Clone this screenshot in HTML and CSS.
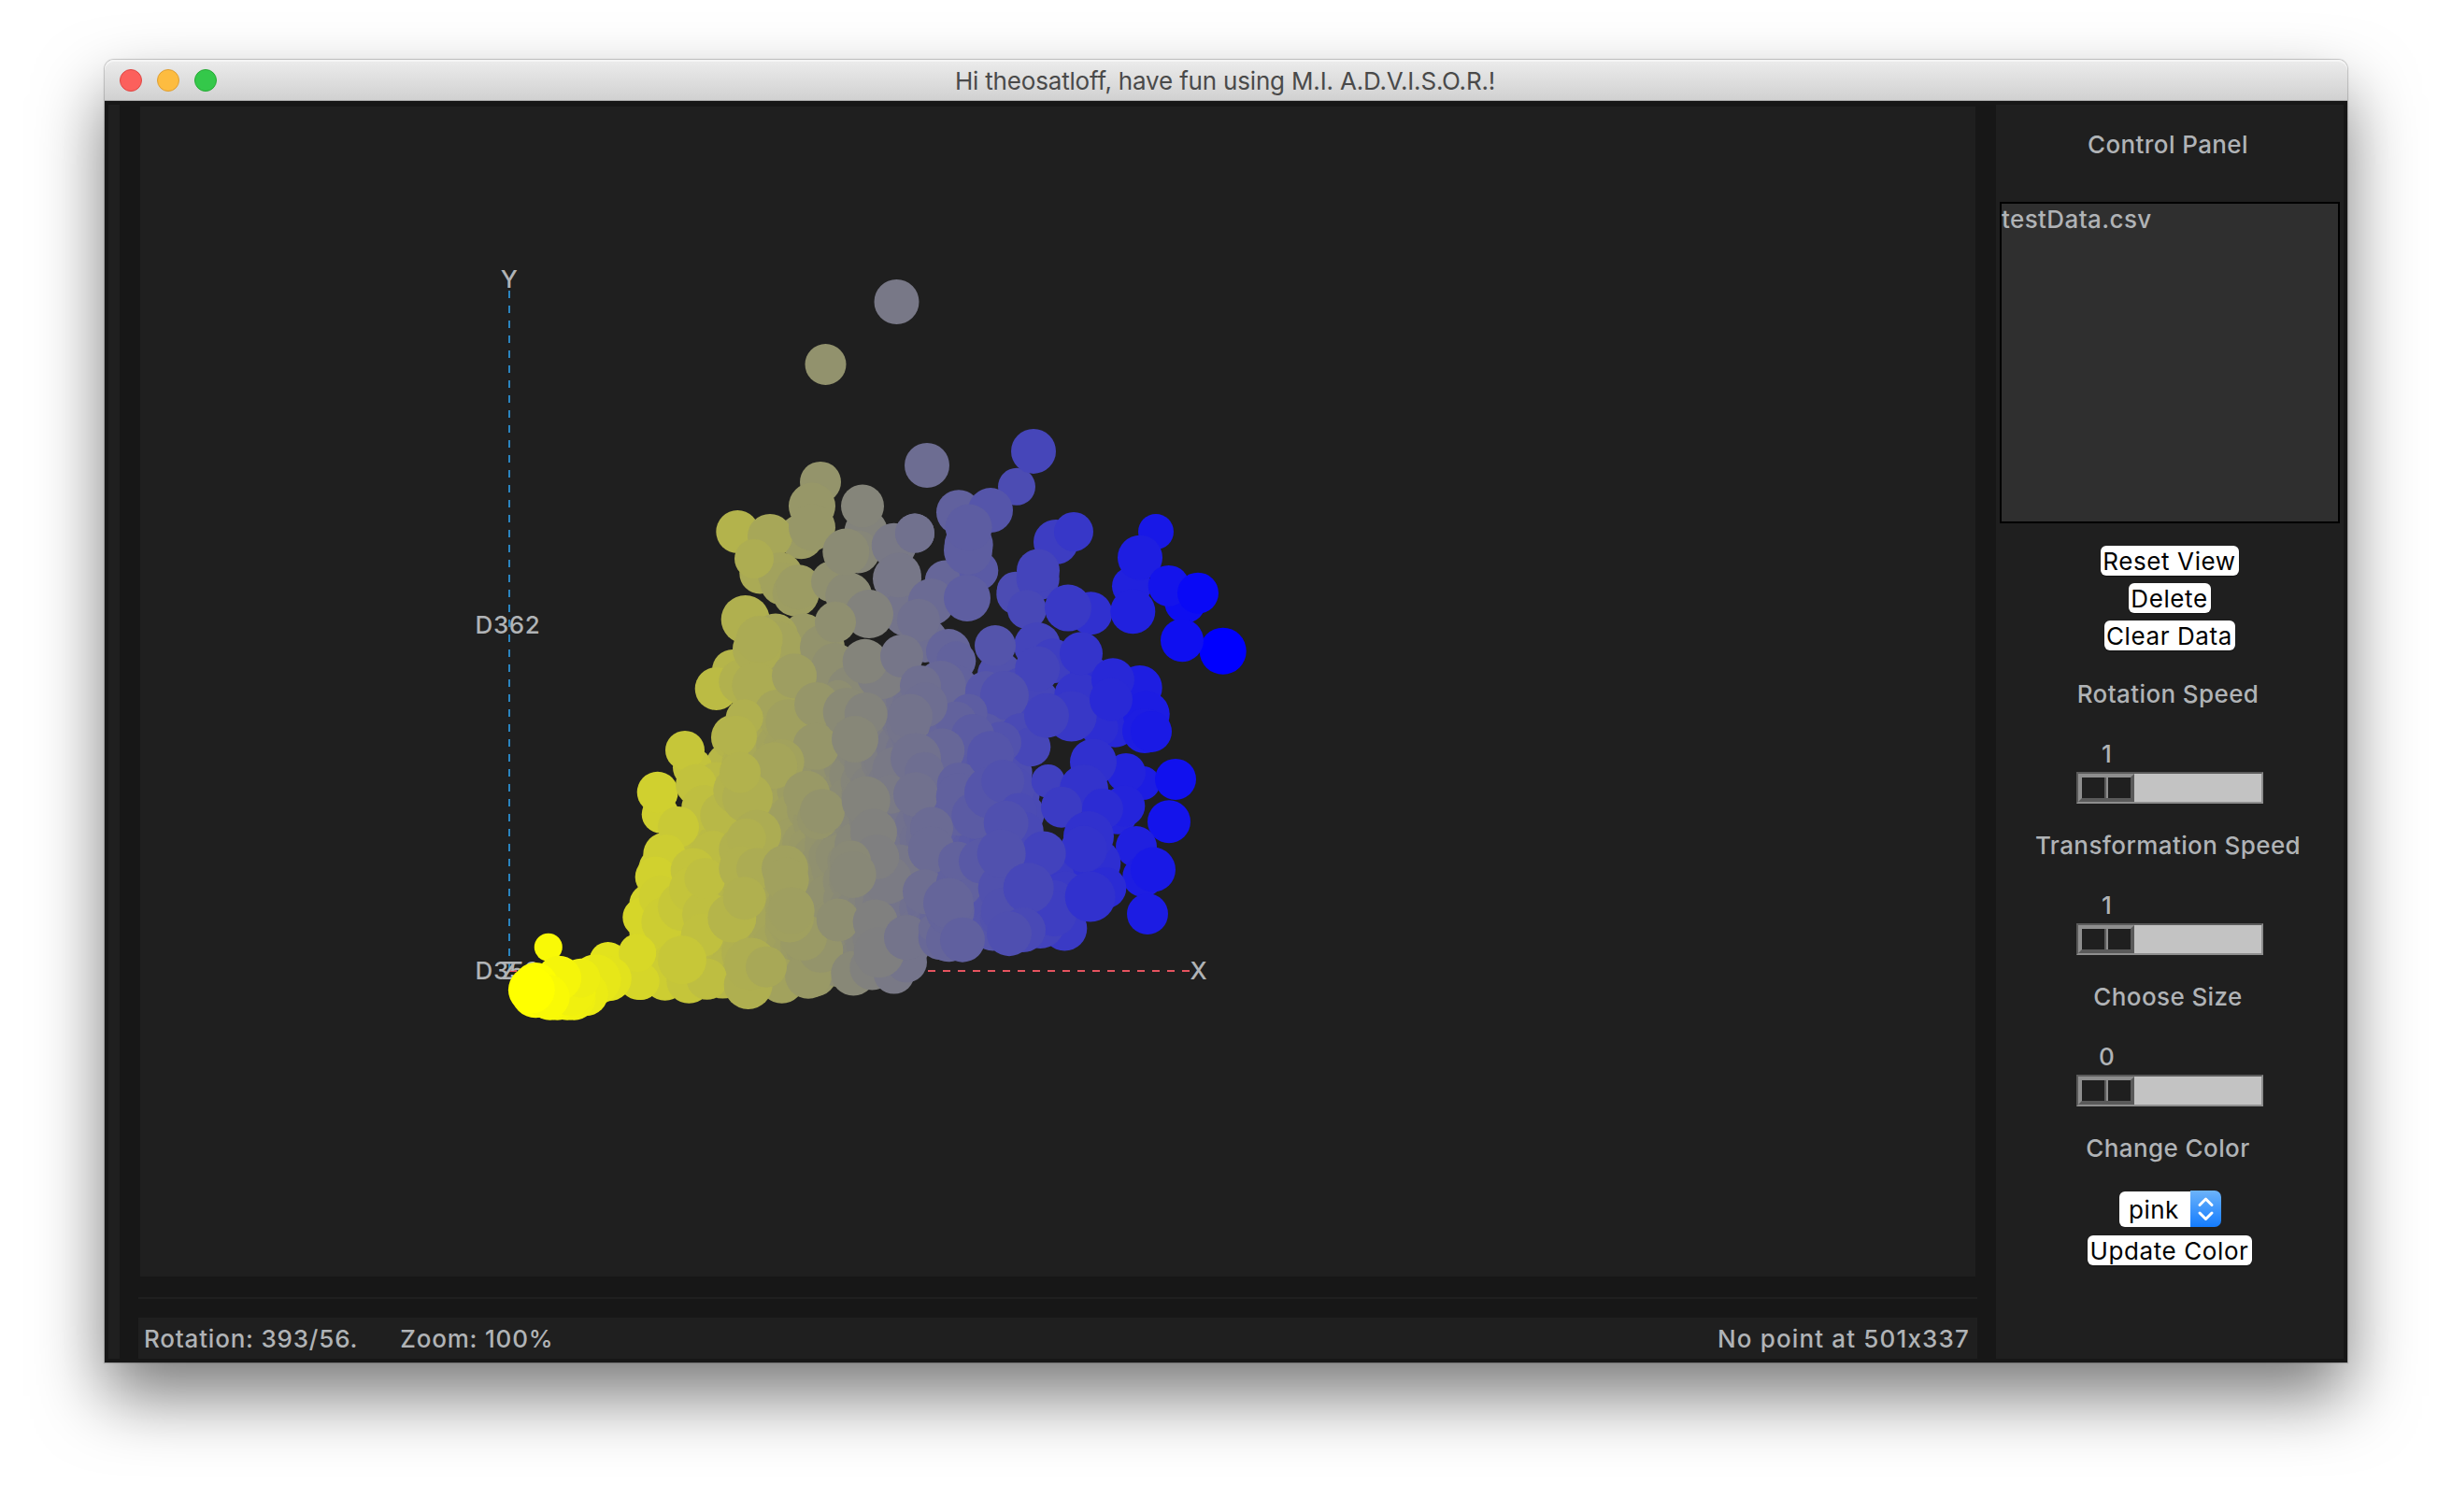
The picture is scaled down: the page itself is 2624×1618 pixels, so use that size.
FILE: index.html
```html
<!DOCTYPE html>
<html lang="en">
<head>
<meta charset="utf-8">
<title>Hi theosatloff, have fun using M.I. A.D.V.I.S.O.R.!</title>
<link rel="stylesheet" href="styles.css">
</head>
<body>
<main class="window">
  <header class="titlebar">
    <div class="lights">
      <span class="light light-close"></span>
      <span class="light light-min"></span>
      <span class="light light-max"></span>
    </div>
    <h1 class="title">Hi theosatloff, have fun using M.I. A.D.V.I.S.O.R.!</h1>
    <div></div>
  </header>
  <div class="content">
    <div class="gutter"></div>
    <section class="workspace">
      <svg class="plot" viewBox="150 114 1964 1252" width="1964" height="1252">
        <path class="axis axis-y" d="M545 1039V303"/>
        <path class="axis axis-x" d="M545 1039H1275"/>
        <g class="axis-labels">
          <text x="545" y="307.5">Y</text>
          <text x="1283" y="1048">X</text>
          <text x="545" y="1048">Z</text>
          <text x="543.5" y="678">D362</text>
          <text x="543.5" y="1048">D359</text>
        </g>
        <g id="points"></g>
      </svg>
      <div class="sash"></div>
      <footer class="status">
        <span class="rotation">Rotation: 393/56.</span>
        <span class="zoom">Zoom: 100%</span>
        <span class="hover">No point at 501x337</span>
      </footer>
    </section>
    <aside class="panel">
      <h2 class="label heading">Control Panel</h2>
      <div class="files"><div class="file">testData.csv</div></div>
      <div class="actions">
        <button class="btn reset">Reset View</button>
        <button class="btn delete">Delete</button>
        <button class="btn clear">Clear Data</button>
      </div>
      <div class="control">
        <div class="label">Rotation Speed</div>
        <div class="value">1</div>
        <div class="slider"><div class="thumb"><i></i><i></i></div></div>
      </div>
      <div class="control">
        <div class="label">Transformation Speed</div>
        <div class="value">1</div>
        <div class="slider"><div class="thumb"><i></i><i></i></div></div>
      </div>
      <div class="control">
        <div class="label">Choose Size</div>
        <div class="value">0</div>
        <div class="slider"><div class="thumb"><i></i><i></i></div></div>
      </div>
      <div class="label">Change Color</div>
      <div class="select">
        <span class="select-text">pink</span>
        <span class="select-arrows">
          <svg width="33" height="39" viewBox="0 0 33 39"><path d="M10 15.5l6.5-6.5 6.5 6.5M10 24l6.5 6.5 6.5-6.5"/></svg>
        </span>
      </div>
      <button class="btn update">Update Color</button>
    </aside>
  </div>
</main>
<script src="points.js"></script>
</body>
</html>
```
FILE: styles.css
```css
* { box-sizing: border-box; }

body {
  margin: 0;
  width: 2624px;
  height: 1618px;
  overflow: hidden;
  background: #fff;
  padding: 64px 112px;
  font-family: Inter, "Liberation Sans", sans-serif;
  font-size: 26px;
  font-weight: 500;
  line-height: 32px;
  color: #b0b3b6;
}

h1, h2 { margin: 0; font-size: inherit; font-weight: inherit; }

.window {
  width: 2400px;
  height: 1394px;
  display: flex;
  flex-direction: column;
  border-radius: 10px 10px 0 0;
  box-shadow: 0 0 1px 1px rgba(0, 0, 0, .2), 0 36px 72px rgba(0, 0, 0, .52);
}

.titlebar {
  height: 44px;
  display: grid;
  grid-template-columns: 1fr auto 1fr;
  align-items: center;
  padding: 0 16px;
  border-radius: 10px 10px 0 0;
  border-bottom: 1px solid #b0b0b0;
  background: linear-gradient(#ececec, #d1d1d1);
  box-shadow: inset 0 2px 0 #f5f5f5;
}

.lights { display: flex; gap: 16px; }
.light { width: 24px; height: 24px; border-radius: 50%; border: 1px solid; }
.light-close { background: #fc605c; border-color: #df4744; }
.light-min { background: #fdbc40; border-color: #de9f34; }
.light-max { background: #34c84a; border-color: #27aa35; }
.title { color: #4a4a4a; font-weight: 400; letter-spacing: -.18px; padding: 2px 2px 0 0; }

.content {
  height: 1350px;
  display: flex;
  padding: 4px;
  background: #171717;
}
.gutter { width: 12px; background: #1f1f1f; }
.workspace {
  width: 1968px;
  margin: 0 20px;
  display: flex;
  flex-direction: column;
}
.plot { display: block; margin: 2px 2px 22px; background: #1f1f1f; }
.sash { height: 2px; margin-bottom: 20px; background: #1f1f1f; }
.status {
  height: 44px;
  display: flex;
  align-items: center;
  padding: 2px 8px 0 6px;
  background: #1f1f1f;
  letter-spacing: .8px;
}
.zoom { margin-left: 45px; }
.hover { margin-left: auto; letter-spacing: 1.15px; }

.axis { fill: none; stroke-width: 2; stroke-dasharray: 8 8; }
.axis-y { stroke: #2a84bf; }
.axis-x { stroke: #e5535f; }
.axis-labels { fill: #b0b3b6; text-anchor: middle; letter-spacing: .6px; }

.panel {
  width: 372px;
  padding: 27px 4px 0;
  display: flex;
  flex-direction: column;
  align-items: center;
  background: #1f1f1f;
}
.label { letter-spacing: .4px; padding-right: 4px; }
.heading { margin-bottom: 45px; }
.files {
  width: 364px;
  height: 344px;
  padding-top: 1px;
  border: 2px solid #000;
  background: #2f2f2f;
  margin-bottom: 24px;
  letter-spacing: .4px;
}
.actions { display: flex; flex-direction: column; align-items: center; gap: 8px; margin-bottom: 31px; }
.btn {
  height: 32px;
  padding: 0 1px 0 0;
  line-height: 33px;
  border: 0;
  border-radius: 6px;
  background: #fff;
  color: #000;
  font-family: inherit;
  font-size: inherit;
  font-weight: 400;
  letter-spacing: .6px;
  white-space: nowrap;
  box-shadow: 0 1px 1px rgba(0, 0, 0, .4);
}
.reset { width: 148px; }
.delete { width: 88px; }
.clear { width: 140px; }
.update { width: 176px; margin-top: 9px; }

.control { height: 162px; display: flex; flex-direction: column; align-items: center; }
.value { margin-top: 32px; margin-right: 135px; }
.slider {
  width: 200px;
  height: 34px;
  margin-top: 3px;
  border: 2px solid;
  border-color: #5a5a5a #8e8e8e #8e8e8e #5a5a5a;
  background: #c3c3c3;
}
.thumb {
  width: 60px;
  height: 30px;
  display: grid;
  grid-template-columns: 26px 26px;
  border: 4px solid;
  border-color: #8e8e8e #5a5a5a #5a5a5a #8e8e8e;
  background: #1f1f1f;
}
.thumb i:first-child { border-right: 2px solid #5a5a5a; }
.thumb i:last-child { border-left: 2px solid #8e8e8e; }

.select { display: flex; height: 39px; margin: 29px 0 0 1px; align-items: center; }
.select-text {
  width: 76px;
  height: 38px;
  line-height: 40px;
  padding-left: 10px;
  border-radius: 6px 0 0 6px;
  background: #fff;
  color: #000;
  font-weight: 400;
  letter-spacing: .5px;
}
.select-arrows {
  width: 33px;
  height: 39px;
  border-radius: 0 7px 7px 0;
  background: linear-gradient(#6cb3fa, #147cfe);
}
.select-arrows svg { display: block; fill: none; stroke: #fff; stroke-width: 3; stroke-linecap: round; stroke-linejoin: round; }
```
FILE: points.js
```js
// Each patch stores its points in local units: origin + value / scale gives plot pixels.
// Points are listed back to front as [x, y, radius].
const patches = [
  { origin: [0, 0], scale: [1, 1], points: [[959.5,323,24],[883.5,390,22]] },
  { origin: [660, 460], scale: [3, 2.45], points: [
    [654,137,22],[388,267,23],[592,280,24],[492,279,24],[627,200,25],[627,256,25],
    [460,376,22],[525,380,24],[530,403,23],[441,338,21],[575,428,25],[583,412,24],
    [800,265,23],[789,200,23],[690,398,22],[745,435,25],[775,320,23],[736,320,25],
    [890,303,24],[957,271,21],[900,390,26],[905,450,25],[930,480,25],
    [413,497,26],[600,540,24],[510,540,24],[520,565,25],[660,570,24],
    [372,630,22],[320,679,23],[400,660,24],[450,575,26],[458,549,25],
    [700,620,25],[750,680,25],[850,640,27],[810,483,26],[702,504,22],[797,607,24],[919,593,21],
    [445,670,25],[515,740,24],[570,645,24],[410,755,20],[550,765,24],[710,700,18],[642,720,24],
    [640,830,25],[740,740,26],[800,745,23],[384,803,22],[765,811,25],
    [890,888,23],[990,720,24],[935,775,23],[943,752,24],
    [243,885,21],[219,840,21],[140,1008,20],[131,950,22],[320,925,22],[255,930,22],
    [280,990,24],[340,1010,24],[198,1041,22],
    [530,870,24],[505,880,25],[385,945,25],[420,965,27],[396,898,22],
    [610,955,25],[645,1020,22],[660,1000,24],[880,955,21],[800,972,26],
    [160,1110,20],[125,1172,22],[82,1278,21],[140,1225,23],[66,1370,20],
    [160,1290,27],[210,1250,26],[310,1110,24],[245,1155,24],[240,1205,24],
    [285,1270,25],[275,1325,23],[283,1176,22],
    [400,1100,24],[450,1060,26],[416,1070,21],[400,1150,24],[450,1150,22],[370,1280,26],[410,1228,23],
    [70,1440,22],[155,1440,23],[232,1445,24],[290,1440,22],[210,1390,26],
    [540,1150,25],[545,1180,24],[530,1445,24],[422,1455,26],[615,1430,25],[655,1365,24],
    [600,1330,25],[555,1280,26],[560,1260,25],[430,1400,28],[480,1408,22],
    [760,1425,24],[820,1410,24],[890,1425,22],[930,1395,22],
    [710,1285,23],[905,1150,26],[870,1180,26],[825,1055,25],[835,1120,24],
    [750,1130,22],[758,1166,25],[930,1330,24],[830,1290,24],[842,1370,27]
  ]},
  { origin: [960, 440], scale: [3, 2.45], points: [
    [5,430,24],[96,142,24],[384,198,20],[438,105,24],[198,265,24],[300,260,24],[57,320,21],
    [155,445,22],[262,418,21],[230,350,26],[228,365,26],[230,305,25],[110,500,25],[225,490,25],
    [90,600,24],[69,548,23],[15,642,23],
    [510,343,24],[567,316,21],[380,470,20],[385,480,22],[452,440,23],[453,418,23],[417,520,21],
    [622,530,23],[549,516,25],
    [831,316,19],[753,459,21],[757,525,24],[780,384,24],[925,502,22],[872,458,22],[966,477,22],
    [1046,629,25],[915,601,23],
    [165,630,24],[190,655,21],[190,720,22],[140,720,27],[75,720,22],
    [330,690,24],[450,615,25],[500,655,24],[400,730,24],[440,760,26],[451,675,24],
    [285,735,22],[345,745,26],[315,615,22],[400,850,24],[430,880,21],[280,850,24],[333,868,22],
    [230,790,20],[190,815,22],[243,850,23],[90,770,24],[35,825,23],[42,800,24],
    [620,695,22],[640,730,25],[700,825,23],[650,830,20],[580,745,25],[560,800,27],[480,798,24],
    [591,635,23],[779,725,24],[800,795,25],[693,704,23],[687,756,23],[795,838,24],[816,840,22],
    [145,890,24],[60,910,27],[88,945,21],[60,1005,24],[200,980,24],[200,1050,26],[200,1010,25],
    [250,1060,25],[300,900,25],[370,990,24],[300,1000,28],[340,970,23],
    [390,1050,20],[410,1100,20],[350,1080,24],[111,1094,23],
    [790,975,18],[735,948,21],[894,965,22],[873,1076,23],[485,970,18],[600,975,20],
    [630,920,25],[600,990,26],[710,1060,20],[730,1035,22],[660,1043,22],[528,1038,22],
    [768,1142,22],[790,1220,22],[822,1202,24],[804,1318,22],
    [110,1150,25],[90,1260,24],[200,1240,25],[195,1180,21],[270,1180,24],
    [545,1210,26],[640,1185,26],[670,1250,22],[615,1115,27],[600,1148,25],
    [540,1260,22],[470,1160,24],[335,1250,25],[345,1310,25],[335,1160,26],
    [538,1356,24],[500,1290,25],[460,1345,26],[505,1318,24],[620,1273,27],
    [422,1250,27],[405,1360,24],[360,1370,24],
    [30,1380,24],[140,1380,24],[110,1355,14],[165,1385,24],[170,1310,26],[165,1290,27],[210,1386,24]
  ]},
  { origin: [500, 960], scale: [2.8, 3], points: [
    [243,161,15],[422,204,20],[520,270,20],[510,180,20],[425,262,24],[385,265,27],
    [355,310,24],[320,326,23],[300,326,23],[270,326,23],[248,326,23],[310,300,27],[340,260,21],[275,260,24],
    [205,310,26],[205,282,24],[240,320,24],[193,298,25]
  ]}
];

// Column envelope of the dense middle of the cloud: [x, top, bottom].
const envelope = [
  [700, 960, 1040], [715, 905, 1042], [740, 880, 1042], [770, 850, 1044], [800, 745, 1046],
  [830, 690, 1044], [870, 700, 1042], [910, 725, 1038], [950, 740, 1036], [972, 745, 1008],
  [1000, 750, 1002], [1030, 755, 998], [1080, 790, 992], [1096, 880, 985]
];

const layer = document.getElementById('points');

// Yellow at the low end of X, blue at the high end.
function colorAt(x) {
  const t = Math.min(1, Math.max(0, (x - 568) / 740));
  const c = Math.round(255 * (1 - t));
  return `rgb(${c},${c},${255 - c})`;
}

function plot(x, y, r) {
  const dot = document.createElementNS('http://www.w3.org/2000/svg', 'circle');
  dot.setAttribute('cx', x.toFixed(1));
  dot.setAttribute('cy', y.toFixed(1));
  dot.setAttribute('r', r);
  dot.setAttribute('fill', colorAt(x));
  layer.appendChild(dot);
}

let seed = 11;
function random() {
  seed = (seed * 16807) % 2147483647;
  return seed / 2147483647;
}

for (let i = 0; i < envelope.length - 1; i++) {
  const [x0, t0, b0] = envelope[i];
  const [x1, t1, b1] = envelope[i + 1];
  for (let x = x0; x < x1; x += 10) {
    const f = (x - x0) / (x1 - x0);
    const top = t0 + (t1 - t0) * f;
    const bottom = b0 + (b1 - b0) * f;
    for (let y = top; y <= bottom; y += 24) {
      plot(x + random() * 10 - 5, Math.min(bottom, y + random() * 16), 20 + random() * 5);
    }
  }
}

for (const { origin, scale, points } of patches) {
  for (const [x, y, r] of points) {
    plot(origin[0] + x / scale[0], origin[1] + y / scale[1], r);
  }
}
```
